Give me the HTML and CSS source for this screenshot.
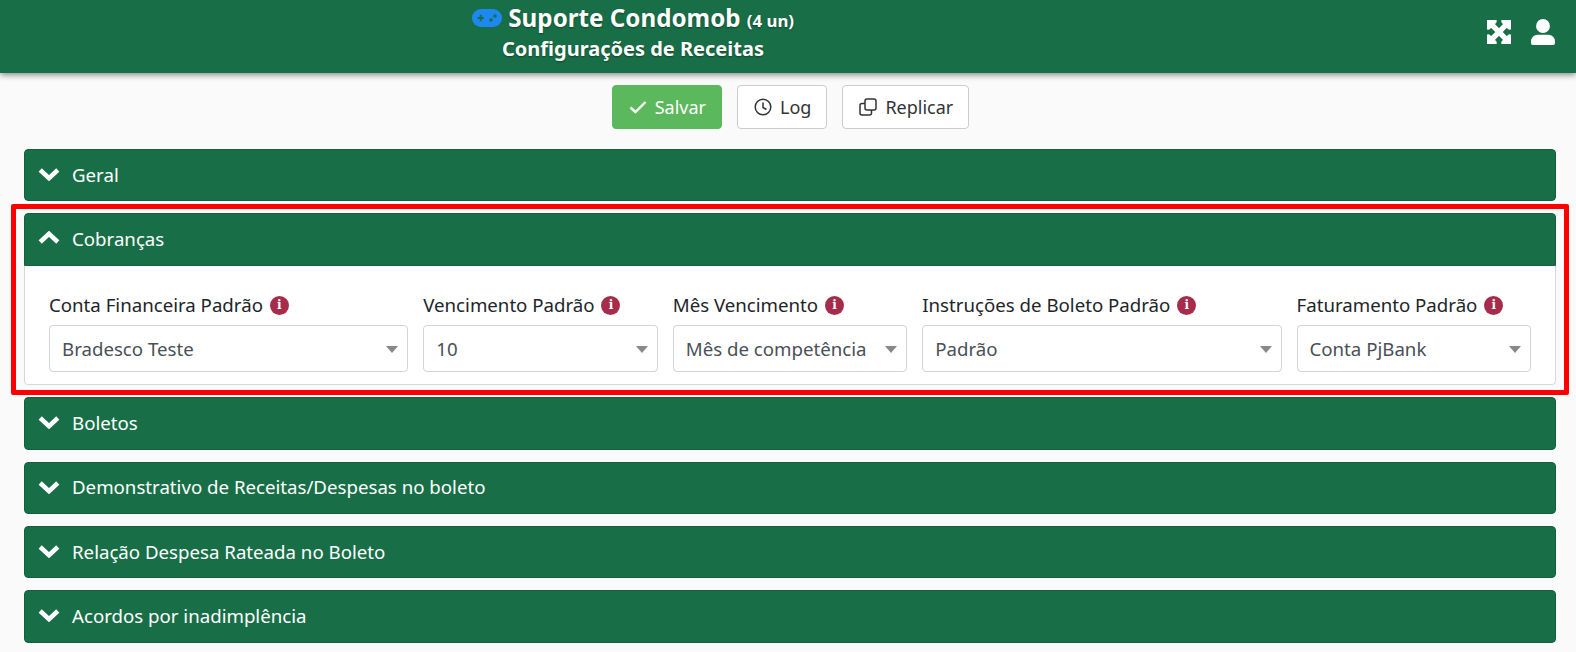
FILE: index.html
```html
<!DOCTYPE html>
<html lang="pt-BR">
<head>
    <meta charset="UTF-8">
    <title>Configurações de Receitas</title>
    <link rel="stylesheet" href="styles.css">
</head>
<body>
    <header class="topbar">
        <div class="topbar-title">
            <div class="title-main">
                <svg class="icon-game" viewBox="0 0 30 18"><rect width="30" height="18" rx="9" fill="#1e88f0"/><path d="M5.500 9h6.500M8.750 5.750v6.500" stroke="#186f47" stroke-width="2"/><circle cx="19" cy="11" r="1.800" fill="#186f47"/><circle cx="23" cy="7" r="1.800" fill="#186f47"/></svg>
                <span>Suporte Condomob</span> <small>(4 un)</small>
            </div>
            <div class="title-sub">Configurações de Receitas</div>
        </div>
        <div class="topbar-icons">
            <svg class="icon-expand" viewBox="0 32 448 448"><path fill="#fff" stroke="#fff" stroke-width="44" d="M448 344v112a23.940 23.940 0 0 1-24 24H312c-21.390 0-32.090-25.900-17-41l36.200-36.200L224 295.600 116.770 402.900 153 439c15.090 15.100 4.390 41-17 41H24a23.940 23.940 0 0 1-24-24V344c0-21.400 25.890-32.100 41-17l36.190 36.200L184.400 256 77.190 148.700 41 184.900c-15.110 15.100-41 4.400-41-17V56a23.940 23.940 0 0 1 24-24h112c21.390 0 32.090 25.900 17 41l-36.200 36.200L224 216.400l107.230-107.200L295 73c-15.090-15.100-4.390-41 17-41h112a23.940 23.940 0 0 1 24 24v112c0 21.400-25.890 32.100-41 17l-36.190-36.200L263.600 256l107.210 107.300L407 327.100c15.110-15.200 41-4.500 41 16.900z"/></svg>
            <svg class="icon-user" viewBox="0 0 26 28"><circle cx="13" cy="7.500" r="7.500" fill="#fff"/><path fill="#fff" d="M7 17h12a7 7 0 0 1 7 7v2a2 2 0 0 1-2 2H2a2 2 0 0 1-2-2v-2a7 7 0 0 1 7-7z"/></svg>
        </div>
    </header>

    <div class="actions">
        <button class="btn btn-success">
            <svg class="btn-icon" viewBox="0 0 18 14"><path d="M1.500 7.500 6.500 12 16.500 2" fill="none" stroke="#fff" stroke-width="2.400"/></svg>
            Salvar
        </button>
        <button class="btn">
            <svg class="btn-icon" viewBox="0 0 18 18"><circle cx="9" cy="9" r="7.800" fill="none" stroke="#333" stroke-width="1.500"/><path d="M9 4.500V9.500L12.500 11.500" fill="none" stroke="#333" stroke-width="1.500"/></svg>
            Log
        </button>
        <button class="btn">
            <svg class="btn-icon" viewBox="0 0 18 18"><rect x="6" y="1" width="11" height="11" rx="2" fill="none" stroke="#333" stroke-width="1.500"/><path d="M6 5.500H3a2 2 0 0 0-2 2V15a2 2 0 0 0 2 2h7.500a2 2 0 0 0 2-2v-3" fill="none" stroke="#333" stroke-width="1.500"/></svg>
            Replicar
        </button>
    </div>

    <main class="panels">
        <div class="panel">
            <div class="panel-head"><svg class="chevron" viewBox="0 0 22 14"><path d="M2.200 3 11 11.200 19.800 3" fill="none" stroke="#fff" stroke-width="4.500"/></svg>Geral</div>
        </div>

        <div class="panel">
            <div class="panel-head"><svg class="chevron" viewBox="0 0 22 14"><path d="M2.200 11 11 2.800 19.800 11" fill="none" stroke="#fff" stroke-width="4.500"/></svg>Cobranças</div>
            <div class="panel-body">
                <div class="field col-3">
                    <label>Conta Financeira Padrão <span class="info">i</span></label>
                    <div class="select">Bradesco Teste</div>
                </div>
                <div class="field col-2">
                    <label>Vencimento Padrão <span class="info">i</span></label>
                    <div class="select">10</div>
                </div>
                <div class="field col-2">
                    <label>Mês Vencimento <span class="info">i</span></label>
                    <div class="select">Mês de competência</div>
                </div>
                <div class="field col-3">
                    <label>Instruções de Boleto Padrão <span class="info">i</span></label>
                    <div class="select">Padrão</div>
                </div>
                <div class="field col-2">
                    <label>Faturamento Padrão <span class="info">i</span></label>
                    <div class="select">Conta PjBank</div>
                </div>
            </div>
        </div>

        <div class="panel">
            <div class="panel-head"><svg class="chevron" viewBox="0 0 22 14"><path d="M2.200 3 11 11.200 19.800 3" fill="none" stroke="#fff" stroke-width="4.500"/></svg>Boletos</div>
        </div>
        <div class="panel">
            <div class="panel-head"><svg class="chevron" viewBox="0 0 22 14"><path d="M2.200 3 11 11.200 19.800 3" fill="none" stroke="#fff" stroke-width="4.500"/></svg>Demonstrativo de Receitas/Despesas no boleto</div>
        </div>
        <div class="panel">
            <div class="panel-head"><svg class="chevron" viewBox="0 0 22 14"><path d="M2.200 3 11 11.200 19.800 3" fill="none" stroke="#fff" stroke-width="4.500"/></svg>Relação Despesa Rateada no Boleto</div>
        </div>
        <div class="panel">
            <div class="panel-head"><svg class="chevron" viewBox="0 0 22 14"><path d="M2.200 3 11 11.200 19.800 3" fill="none" stroke="#fff" stroke-width="4.500"/></svg>Acordos por inadimplência</div>
        </div>
    </main>

    <div class="highlight"></div>
</body>
</html>
```

FILE: styles.css
```css
* {
    box-sizing: border-box;
}

html, body {
    height: 100%;
}

body {
    margin: 0;
    overflow: hidden;
    position: relative;
    font-family: "Noto Sans", sans-serif;
    font-size: 18.67px;
    color: #212529;
    background-color: #fafafa;
}

.topbar {
    height: 73px;
    background-color: #186f47;
    color: #fff;
    box-shadow: 0 2px 6px rgba(0, 0, 0, 0.45);
    display: flex;
    justify-content: center;
    position: relative;
    text-shadow: 0 1px 2px rgba(0, 0, 0, 0.4);
}

.topbar-title {
    text-align: center;
    font-weight: 700;
    margin-right: 310px;
    padding-top: 2px;
}

.title-main {
    font-size: 24.2px;
    line-height: 32px;
}

.title-main small {
    font-size: 16.8px;
}

.title-sub {
    font-size: 20px;
    line-height: 24px;
}

.icon-game {
    width: 30px;
    height: 18px;
    vertical-align: 0;
}

.topbar-icons {
    position: absolute;
    right: 21px;
    top: 18px;
    display: flex;
    align-items: center;
    gap: 20px;
}

.icon-expand {
    width: 24px;
    height: 24px;
}

.icon-user {
    width: 24px;
    height: 28px;
}

.actions {
    display: flex;
    justify-content: center;
    gap: 15px;
    padding-top: 12px;
    padding-left: 5px;
    height: 76px;
}

.btn {
    height: 44px;
    padding: 0 15px 0 16px;
    font-family: inherit;
    font-size: 18px;
    color: #333;
    background-color: #fff;
    border: 1px solid #ccc;
    border-radius: 4px;
    display: flex;
    align-items: center;
    gap: 8px;
}

.btn-success {
    color: #fff;
    background-color: #5cb85c;
    border-color: #5cb85c;
}

.btn-icon {
    width: 18px;
    height: 18px;
}

.panels {
    padding: 0 20px 0 24px;
    display: flex;
    flex-direction: column;
    gap: 12px;
}

.panel {
    border-radius: 4px;
    overflow: hidden;
}

.panel-head {
    height: 52.33px;
    padding: 0 13px 2px;
    background-color: #186f47;
    border: 1px solid #145f3d;
    color: #fff;
    display: flex;
    align-items: center;
    gap: 12px;
    border-radius: 4px;
}

.panel:nth-child(2) .panel-head {
    border-radius: 4px 4px 0 0;
}

.chevron {
    width: 22px;
    height: 14px;
}

.panel-body {
    display: flex;
    background-color: #fff;
    border: 1px solid #d5d9de;
    border-top: 0;
    border-radius: 0 0 4px 4px;
    padding: 26.67px 16.5px 12px;
}

.field {
    padding: 0 7.5px;
    min-width: 0;
}

.col-3 {
    width: 25%;
}

.col-2 {
    width: 16.6667%;
}

.field label {
    display: block;
    line-height: 26px;
    margin-bottom: 7px;
    color: #212529;
    white-space: nowrap;
}

.info {
    display: inline-block;
    width: 19px;
    height: 19px;
    line-height: 19px;
    border-radius: 50%;
    background-color: #a62c4b;
    color: #fff;
    font-family: "DejaVu Serif", serif;
    font-size: 12px;
    font-weight: 700;
    text-align: center;
    vertical-align: 3px;
    margin-left: 2px;
}

.select {
    height: 47px;
    line-height: 45px;
    padding: 0 12px;
    border: 1px solid #ced4da;
    border-radius: 4px;
    background-color: #fff;
    color: #495057;
    white-space: nowrap;
    position: relative;
}

.select::after {
    content: "";
    position: absolute;
    right: 9px;
    top: 20px;
    border-left: 6px solid transparent;
    border-right: 6px solid transparent;
    border-top: 7px solid #888;
}

.highlight {
    position: absolute;
    left: 11px;
    top: 204px;
    width: 1558px;
    height: 191px;
    border: 5px solid #f00;
    border-radius: 2px;
    pointer-events: none;
}
```
